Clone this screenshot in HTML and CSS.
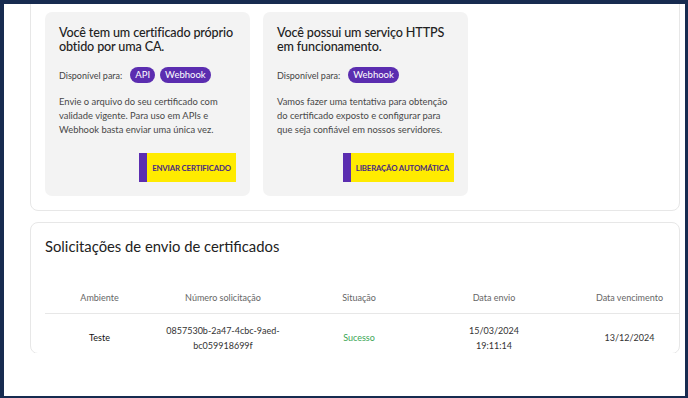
FILE: index.html
```html
<!DOCTYPE html>
<html>
<head>
    <title>Certificados</title>
    <link rel="stylesheet" href="styles.css">
</head>
<body>
    <div class="screen">
        <div class="viewport">
            <div class="panel options">
                <div class="option-card">
                    <h2>Você tem um certificado próprio obtido por uma CA.</h2>
                    <div class="available">
                        <span>Disponível para:</span>
                        <span class="badge">API</span>
                        <span class="badge">Webhook</span>
                    </div>
                    <p>Envie o arquivo do seu certificado com validade vigente. Para uso em APIs e Webhook basta enviar uma única vez.</p>
                    <div class="actions">
                        <button class="action-button">ENVIAR CERTIFICADO</button>
                    </div>
                </div>
                <div class="option-card">
                    <h2>Você possui um serviço HTTPS em funcionamento.</h2>
                    <div class="available">
                        <span>Disponível para:</span>
                        <span class="badge">Webhook</span>
                    </div>
                    <p>Vamos fazer uma tentativa para obtenção do certificado exposto e configurar para que seja confiável em nossos servidores.</p>
                    <div class="actions">
                        <button class="action-button">LIBERAÇÃO AUTOMÁTICA</button>
                    </div>
                </div>
            </div>

            <div class="panel requests">
                <h1>Solicitações de envio de certificados</h1>
                <div class="table">
                    <div class="row head">
                        <div>Ambiente</div>
                        <div>Número solicitação</div>
                        <div>Situação</div>
                        <div>Data envio</div>
                        <div class="last">Data vencimento</div>
                    </div>
                    <div class="row">
                        <div class="env">Teste</div>
                        <div>0857530b-2a47-4cbc-9aed-<br>bc059918699f</div>
                        <div class="success">Sucesso</div>
                        <div>15/03/2024<br>19:11:14</div>
                        <div class="last">13/12/2024</div>
                    </div>
                </div>
            </div>
        </div>
    </div>
</body>
</html>
```

FILE: styles.css
```css
:root {
    --frame-color: #172b50;
    --card-bg: #f3f3f3;
    --border-color: #e7e7e7;
    --purple: #5b2db0;
    --yellow: #ffeb00;
    --text-color: #222;
}

body {
    margin: 0;
    padding: 4px 3px 2px 4px;
    background-color: var(--frame-color);
    font-family: Lato, "Noto Sans", sans-serif;
    color: var(--text-color);
}

.screen {
    height: 392px;
    background-color: white;
    overflow: hidden;
}

.viewport {
    height: 349px;
    overflow: hidden;
    padding: 0 5px 0 26px;
}

.panel {
    border: 1px solid var(--border-color);
    border-radius: 8px;
    background-color: white;
}

.options {
    margin-top: -10px;
    padding: 17px 14px 14px 14px;
    display: flex;
    gap: 13px;
}

.option-card {
    width: 177px;
    padding: 14px 14px 14px 14px;
    background-color: var(--card-bg);
    border-radius: 7px;
    display: flex;
    flex-direction: column;
}

.option-card h2 {
    margin: 0;
    font-size: 12.6px;
    line-height: 14px;
    font-weight: 500;
    letter-spacing: -0.15px;
}

.available {
    margin-top: 13px;
    display: flex;
    align-items: center;
    gap: 5px;
    font-size: 9px;
    color: #444;
}

.available span:first-child {
    margin-right: 3px;
}

.badge {
    background-color: var(--purple);
    color: white;
    border-radius: 8px;
    padding: 0 5px;
    height: 16px;
    line-height: 16px;
    font-size: 9.5px;
}

.option-card p {
    margin: 12px 0 0 0;
    font-size: 9.4px;
    line-height: 14px;
    color: #484848;
}

.actions {
    margin-top: 16px;
    display: flex;
    justify-content: flex-end;
}

.action-button {
    height: 29px;
    border: none;
    border-left: 8px solid var(--purple);
    background-color: var(--yellow);
    color: #4a2a80;
    font-family: Lato, sans-serif;
    font-weight: 700;
    font-size: 7.8px;
    letter-spacing: -0.15px;
    padding: 0 5px 0 5px;
}

.requests {
    margin-top: 11px;
    padding: 13px 0 0 14px;
}

.requests h1 {
    margin: 0;
    font-size: 14.8px;
    line-height: 20px;
    font-weight: 400;
}

.table {
    margin-top: 27px;
    font-size: 9px;
}

.row {
    display: grid;
    grid-template-columns: 109px 138px 134px 136px 1fr;
    text-align: center;
    line-height: 14.5px;
}

.row.head {
    height: 30px;
    align-items: center;
    color: #666;
    border-bottom: 1px solid var(--border-color);
}

.row .last {
    padding-left: 18px;
}

.row:not(.head) {
    padding-top: 10px;
    align-items: center;
    color: #333;
}

.env {
    color: #111;
}

.success {
    color: #3aa655;
}
```
